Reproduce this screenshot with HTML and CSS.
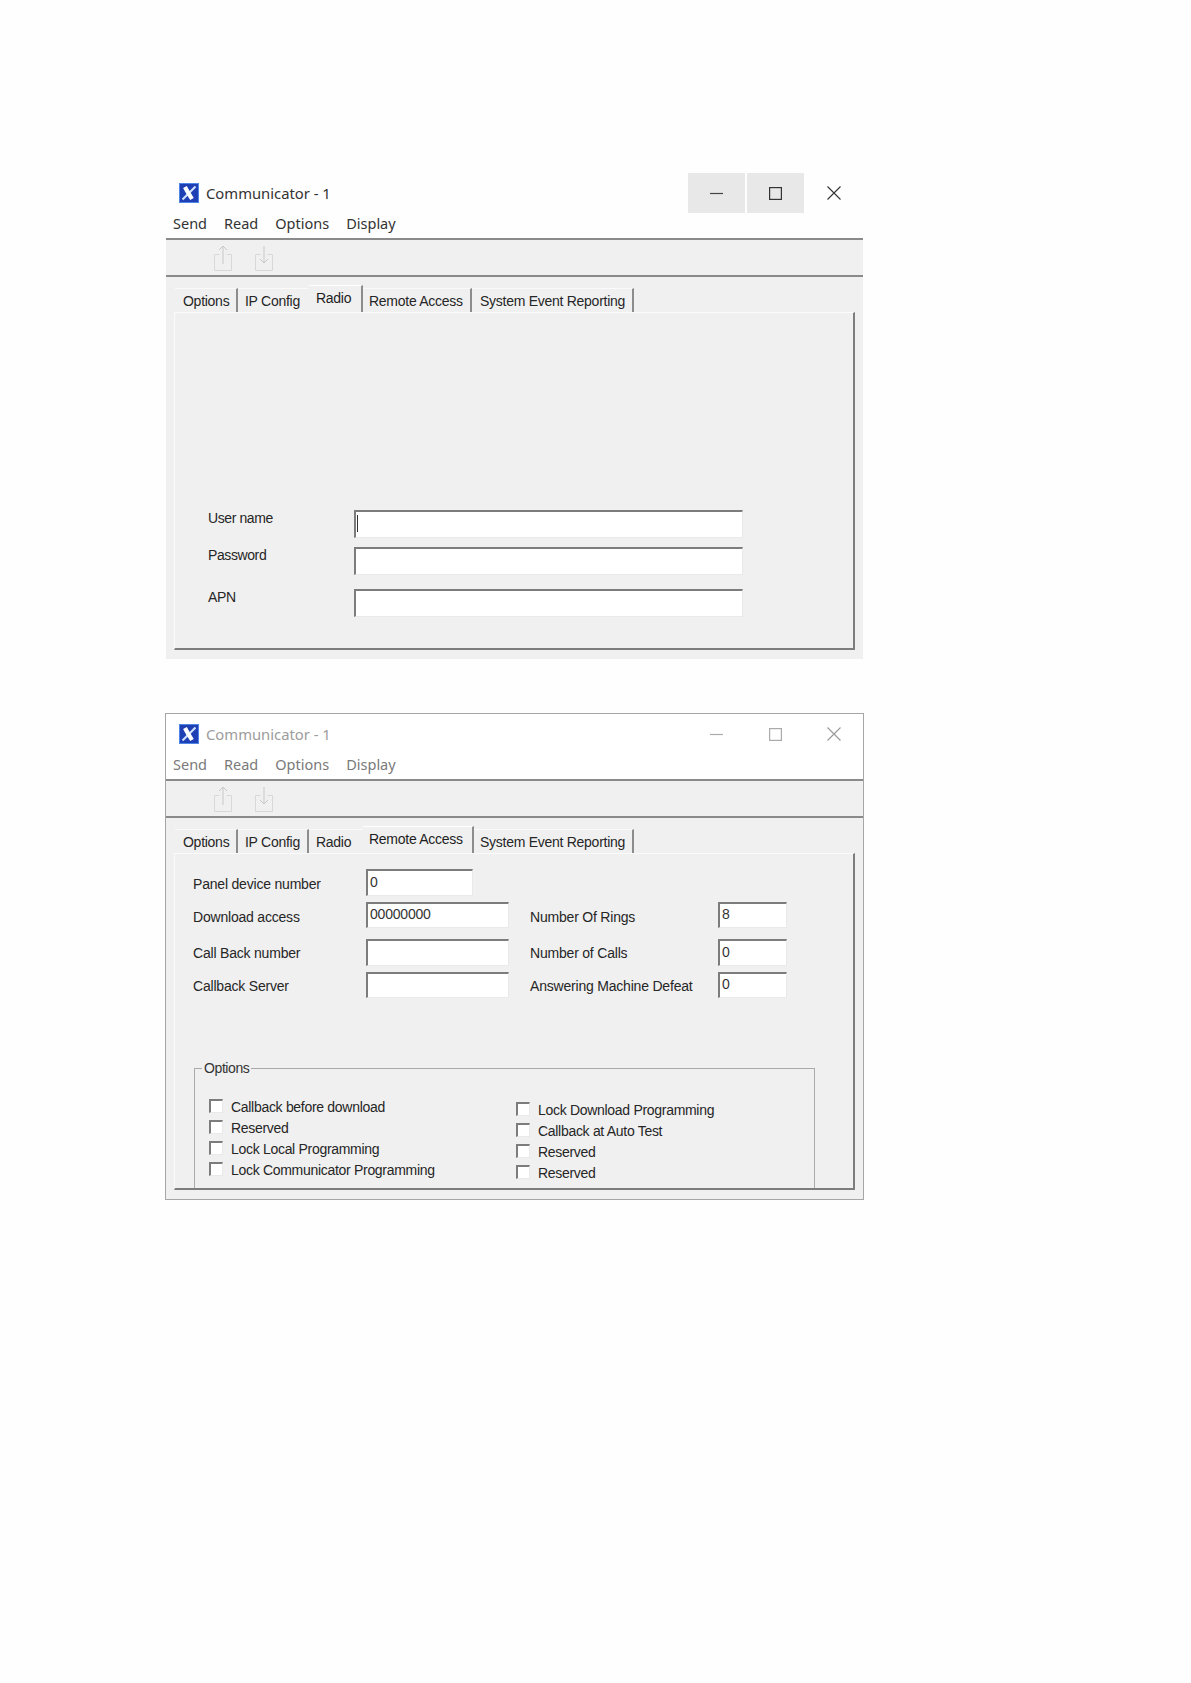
FILE: index.html
```html
<!DOCTYPE html>
<html lang="en">
<head>
<meta charset="utf-8">
<title>Communicator - 1</title>
<link rel="stylesheet" href="styles.css">
</head>
<body>
<main class="page">

<section class="window window-active">
  <header class="titlebar">
    <svg class="logo" viewBox="0 0 20 20"><rect x=".5" y=".5" width="19" height="19" fill="#1f3fb4" stroke="#4f86e6"/><path d="M3.5 16.5L16.5 3.5" stroke="#cfe0fb" stroke-width="2.2" fill="none"/><path d="M6 4C8 8 10.500 12 13 16" stroke="#fff" stroke-width="4.200" fill="none"/></svg>
    <span class="title">Communicator - 1</span>
    <div class="controls">
      <button class="ctl ctl-hover" aria-label="Minimize"><svg width="13" height="12" viewBox="0 0 13 12"><path d="M0 6.500H13" stroke="#444" stroke-width="1.200"/></svg></button>
      <button class="ctl ctl-hover" aria-label="Maximize"><svg width="13" height="13" viewBox="0 0 13 13"><rect x=".6" y=".6" width="11.800" height="11.800" fill="none" stroke="#333" stroke-width="1.200"/></svg></button>
      <button class="ctl ctl-close" aria-label="Close"><svg width="14" height="14" viewBox="0 0 14 14"><path d="M.5.5L13.500 13.500M13.500.5L.5 13.500" stroke="#333" stroke-width="1.100"/></svg></button>
    </div>
  </header>
  <nav class="menu"><span>Send</span><span>Read</span><span>Options</span><span>Display</span></nav>
  <div class="client">
    <div class="toolbar">
      <svg class="tool" viewBox="0 0 18 26"><path d="M5.500 9.500H.5V25.500H17.500V9.500H12.500" fill="none" stroke="#d8d8d8"/><path d="M9 19V1M5 5L9 1L13 5" fill="none" stroke="#c8c8c8"/></svg>
      <svg class="tool" viewBox="0 0 18 26"><path d="M5.500 9.500H.5V25.500H17.500V9.500H12.500" fill="none" stroke="#d8d8d8"/><path d="M9 1V18M5 14L9 18L13 14" fill="none" stroke="#c8c8c8"/></svg>
    </div>
    <div class="tabs">
      <span class="tab tab-options">Options</span>
      <span class="tab tab-ip tab-before-active">IP Config</span>
      <span class="tab tab-radio tab-active">Radio</span>
      <span class="tab tab-remote">Remote Access</span>
      <span class="tab tab-system">System Event Reporting</span>
    </div>
    <div class="panel panel-radio">
      <div class="cred-row"><label class="cred-label">User name</label><span class="caret-wrap"><input class="field field-cred" type="text"></span></div>
      <div class="cred-row"><label class="cred-label">Password</label><input class="field field-cred" type="text"></div>
      <div class="cred-row cred-row-apn"><label class="cred-label">APN</label><input class="field field-cred" type="text"></div>
    </div>
  </div>
</section>

<section class="window window-inactive">
  <header class="titlebar">
    <svg class="logo" viewBox="0 0 20 20"><rect x=".5" y=".5" width="19" height="19" fill="#1f3fb4" stroke="#4f86e6"/><path d="M3.500 16.500L16.500 3.500" stroke="#cfe0fb" stroke-width="2.200" fill="none"/><path d="M6 4C8 8 10.500 12 13 16" stroke="#fff" stroke-width="4.200" fill="none"/></svg>
    <span class="title">Communicator - 1</span>
    <div class="controls">
      <button class="ctl" aria-label="Minimize"><svg width="13" height="12" viewBox="0 0 13 12"><path d="M0 6.500H13" stroke="#aaa" stroke-width="1.200"/></svg></button>
      <button class="ctl" aria-label="Maximize"><svg width="13" height="13" viewBox="0 0 13 13"><rect x=".6" y=".6" width="11.800" height="11.800" fill="none" stroke="#aaa" stroke-width="1.200"/></svg></button>
      <button class="ctl ctl-close" aria-label="Close"><svg width="14" height="14" viewBox="0 0 14 14"><path d="M.5.5L13.500 13.500M13.500.5L.5 13.500" stroke="#999" stroke-width="1.100"/></svg></button>
    </div>
  </header>
  <nav class="menu"><span>Send</span><span>Read</span><span>Options</span><span>Display</span></nav>
  <div class="client">
    <div class="toolbar">
      <svg class="tool" viewBox="0 0 18 26"><path d="M5.500 9.500H.5V25.500H17.500V9.500H12.500" fill="none" stroke="#d8d8d8"/><path d="M9 19V1M5 5L9 1L13 5" fill="none" stroke="#c8c8c8"/></svg>
      <svg class="tool" viewBox="0 0 18 26"><path d="M5.500 9.500H.5V25.500H17.500V9.500H12.500" fill="none" stroke="#d8d8d8"/><path d="M9 1V18M5 14L9 18L13 14" fill="none" stroke="#c8c8c8"/></svg>
    </div>
    <div class="tabs">
      <span class="tab tab-options">Options</span>
      <span class="tab tab-ip">IP Config</span>
      <span class="tab tab-radio tab-before-active">Radio</span>
      <span class="tab tab-remote tab-active">Remote Access</span>
      <span class="tab tab-system">System Event Reporting</span>
    </div>
    <div class="panel panel-remote">
      <div class="remote-grid">
        <label class="form-label form-label-mid">Panel device number</label>
        <input class="field field-short" type="text" value="0">
        <span></span><span></span>

        <label class="form-label form-label-low">Download access</label>
        <input class="field field-thin" type="text" value="00000000">
        <label class="form-label form-label-low form-label-right">Number Of Rings</label>
        <input class="field field-thin" type="text" value="8">

        <label class="form-label">Call Back number</label>
        <input class="field" type="text">
        <label class="form-label form-label-right">Number of Calls</label>
        <input class="field" type="text" value="0">

        <label class="form-label form-label-mid">Callback Server</label>
        <input class="field field-thin" type="text">
        <label class="form-label form-label-mid form-label-right">Answering Machine Defeat</label>
        <input class="field field-thin" type="text" value="0">
      </div>
      <fieldset class="group">
        <legend>Options</legend>
        <div class="check-col">
          <label class="check"><span class="box"></span>Callback before download</label>
          <label class="check"><span class="box"></span>Reserved</label>
          <label class="check"><span class="box"></span>Lock Local Programming</label>
          <label class="check"><span class="box"></span>Lock Communicator Programming</label>
        </div>
        <div class="check-col check-col-right">
          <label class="check"><span class="box"></span>Lock Download Programming</label>
          <label class="check"><span class="box"></span>Callback at Auto Test</label>
          <label class="check"><span class="box"></span>Reserved</label>
          <label class="check"><span class="box"></span>Reserved</label>
        </div>
      </fieldset>
    </div>
  </div>
</section>

</main>
</body>
</html>
```
FILE: styles.css
```css
* { box-sizing: border-box; }
html, body { margin: 0; background: #fefefe; }
.page {
  min-height: 1683px;
  padding: 172px 0 0 165px;
  display: flex;
  flex-direction: column;
  gap: 53px;
}
.window {
  width: 699px;
  border: 1px solid transparent;
  color: #262626;
  display: flex;
  flex-direction: column;
}
.window-inactive { border-color: #a6a6a6; height: 487px; background: #fff; }
.window-active { height: 488px; }
.titlebar {
  height: 39px;
  flex: none;
  display: flex;
  align-items: center;
  padding-left: 13px;
}
.logo { width: 20px; height: 20px; flex: none; }
.title {
  margin-left: 7px;
  font: 14.8px "Noto Sans", sans-serif;
  color: #333;
}
.window-inactive .title { color: #9c9c9c; }
.controls {
  margin-left: auto;
  margin-right: 2px;
  display: flex;
  gap: 2px;
  align-self: flex-start;
}
.ctl {
  width: 57px;
  height: 40px;
  border: 0;
  padding: 0;
  background: transparent;
  display: flex;
  align-items: center;
  justify-content: center;
}
.ctl-close { width: 55px; }
.ctl-hover { background: #e8e8e8; }
.menu {
  height: 26px;
  flex: none;
  display: flex;
  gap: 17px;
  padding: 0 0 5px 7px;
  align-items: center;
  font: 14.5px "Noto Sans", sans-serif;
  color: #333;
}
.window-inactive .menu { color: #7a7a7a; }
.client {
  flex: 1;
  background: #f0f0f0;
  display: flex;
  flex-direction: column;
}
.toolbar {
  height: 39px;
  flex: none;
  border-top: 2px solid #8a8a8a;
  border-bottom: 2px solid #8a8a8a;
  display: flex;
  align-items: center;
  gap: 23px;
  padding-left: 48px;
}
.tool { width: 18px; height: 26px; flex: none; }
.tabs {
  height: 35px;
  flex: none;
  display: flex;
  align-items: flex-end;
  padding-left: 9px;
  font: 14px "Liberation Sans", sans-serif;
  letter-spacing: -0.27px;
}
.tab {
  height: 24px;
  padding: 4px 0 0 8px;
  border-top: 1px solid #fafafa;
  border-right: 2px solid #8c8c8c;
  white-space: nowrap;
}
.tab-options { width: 63px; }
.tab-ip { width: 71px; padding-left: 7px; }
.tab-radio { width: 54px; padding-left: 7px; }
.tab-remote { width: 109px; padding-left: 6px; }
.tab-system { width: 162px; }
.tab-before-active { border-right-color: transparent; }
.tab-active {
  height: 27px;
  border-top-color: #fff;
  color: #1e1e1e;
}
.tab-remote.tab-active { width: 111px; }
.tab-remote.tab-active + .tab-system { width: 160px; padding-left: 6px; }
.panel {
  margin-left: 8px;
  width: 681px;
  background: #f0f0f0;
  border-top: 1px solid #fbfbfb;
  border-left: 1px solid #fbfbfb;
  border-right: 2px solid #7d7d7d;
  border-bottom: 2px solid #7d7d7d;
  overflow: hidden;
}
.panel-radio { height: 338px; padding: 197px 0 0 33px; }
.panel-remote { height: 337px; padding: 15px 0 0 18px; }

.cred-row {
  display: flex;
  align-items: flex-start;
  height: 28px;
  margin-bottom: 9px;
}
.cred-row-apn { margin-top: 14px; }
.cred-label {
  width: 146px;
  padding-top: 1px;
  font: 14px/14px "Liberation Sans", sans-serif;
  letter-spacing: -0.4px;
  color: #262626;
}
.caret-wrap { position: relative; display: block; height: 28px; }
.caret-wrap::after {
  content: "";
  position: absolute;
  left: 3px;
  top: 5px;
  width: 1px;
  height: 17px;
  background: #333;
}
.field {
  display: block;
  width: 100%;
  height: 27px;
  margin: 0;
  padding: 0 0 3px 2px;
  background: #fff;
  border-style: solid;
  border-width: 2px 1px 1px 2px;
  border-color: #7c7c7c #e9e9e9 #e9e9e9 #7c7c7c;
  border-radius: 0;
  outline: 0;
  font: 14px "Liberation Sans", sans-serif;
  letter-spacing: -0.2px;
  color: #333;
}
.field-cred { width: 389px; height: 28px; }
.field-short { width: 107px; }
.field-thin { height: 26px; }

.remote-grid {
  display: grid;
  grid-template-columns: 173px 143px 209px 69px;
  grid-template-rows: 27px 32px 38px 32px;
  height: 129px;
}
.remote-grid > .field { align-self: end; }
.form-label {
  align-self: end;
  height: 26px;
  font: 14px/26px "Liberation Sans", sans-serif;
  letter-spacing: -0.2px;
  color: #262626;
  white-space: nowrap;
}
.form-label-mid { line-height: 28px; }
.form-label-low { line-height: 30px; }
.form-label-right { padding-left: 21px; }
.group {
  margin: 62px 0 0 1px;
  width: 621px;
  height: 160px;
  padding: 22px 0 0 14px;
  display: grid;
  grid-template-columns: 307px 1fr;
  align-content: start;
  border: 1px solid #aaa;
  border-bottom: 0;
  border-radius: 0;
  min-inline-size: 0;
}
.group legend {
  margin-left: -7px;
  padding: 0 2px;
  font: 14px "Liberation Sans", sans-serif;
  letter-spacing: -0.4px;
  color: #333;
}
.check-col { display: flex; flex-direction: column; gap: 4px; }
.check-col-right { margin-top: 3px; }
.check {
  height: 17px;
  display: flex;
  align-items: center;
  gap: 8px;
  font: 14px "Liberation Sans", sans-serif;
  letter-spacing: -0.3px;
  color: #262626;
  white-space: nowrap;
}
.box {
  width: 14px;
  height: 14px;
  flex: none;
  background: #fff;
  border-style: solid;
  border-width: 2px 1px 1px 2px;
  border-color: #7c7c7c #e9e9e9 #e9e9e9 #7c7c7c;
  margin-top: -1px;
}
```
